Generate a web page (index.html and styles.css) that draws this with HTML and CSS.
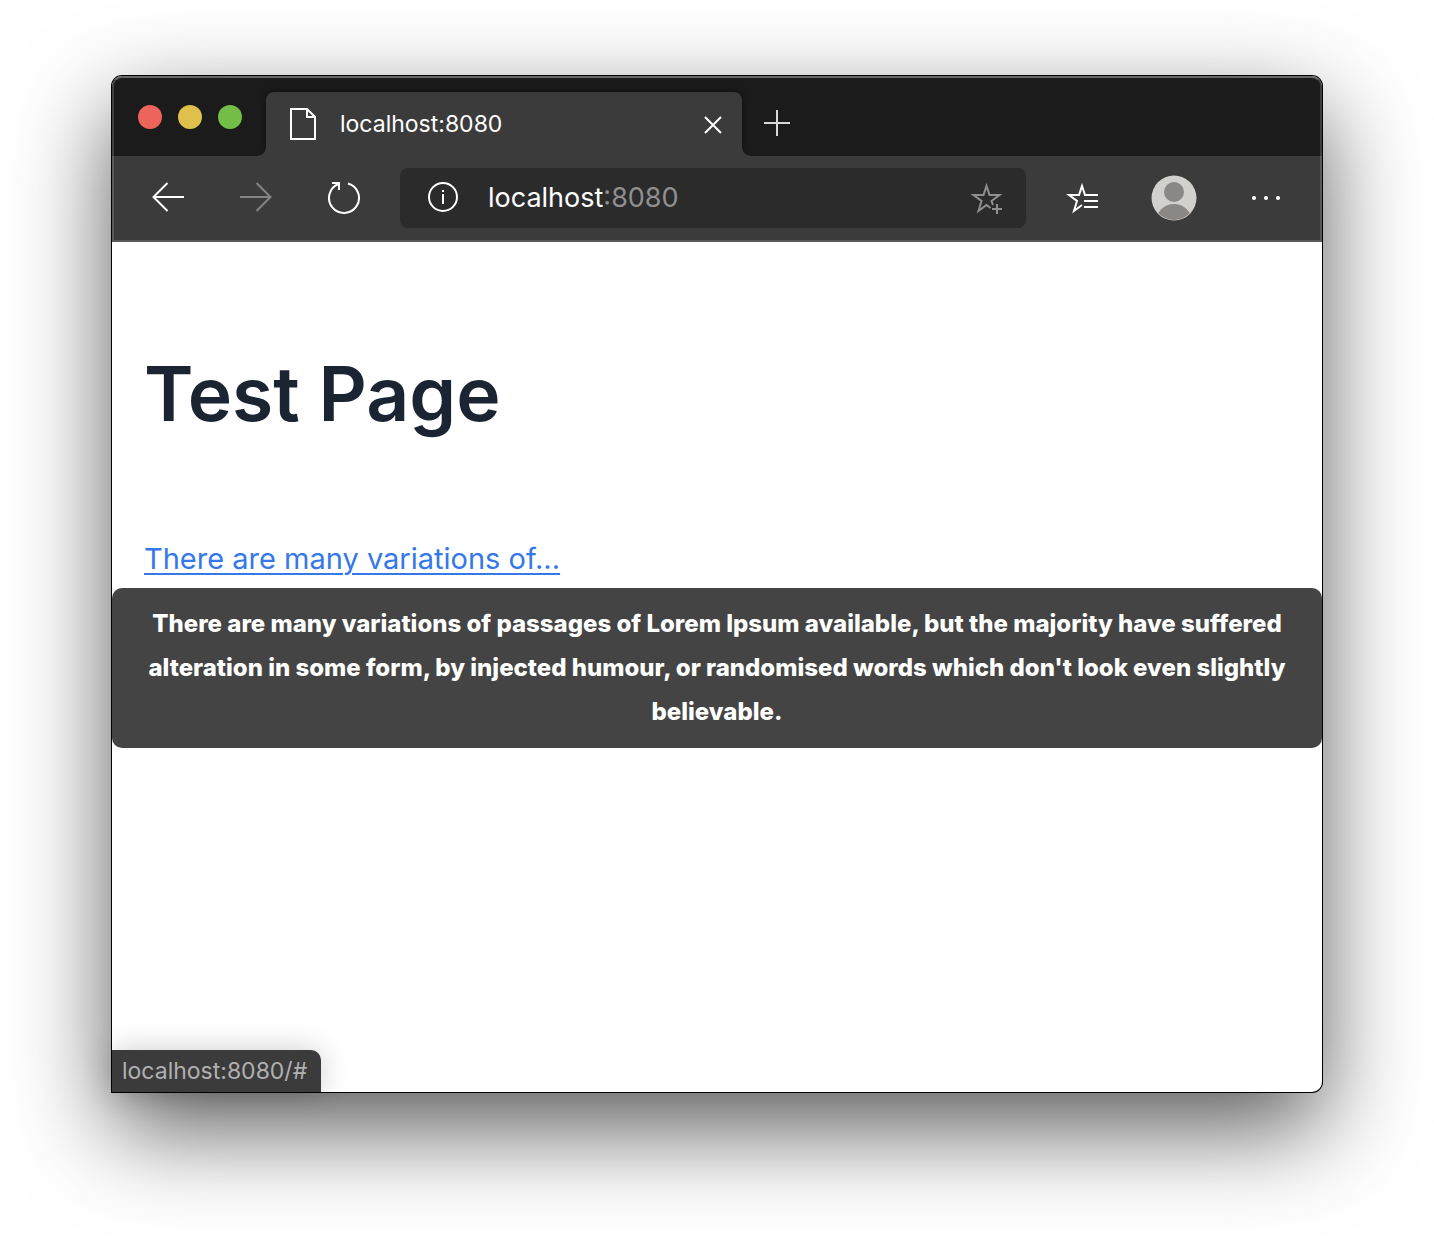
FILE: index.html
```
<!DOCTYPE html>
<html lang="en">
<head>
<meta charset="utf-8">
<title>Test Page</title>
<link rel="stylesheet" href="styles.css">
</head>
<body>
<div class="window">
  <header class="chrome">
    <div class="tabstrip">
      <div class="lights">
        <button class="light light-close" aria-label="Close window"></button>
        <button class="light light-min" aria-label="Minimize window"></button>
        <button class="light light-max" aria-label="Zoom window"></button>
      </div>
      <div class="tab">
        <svg class="tab-icon" width="28" height="34" viewBox="0 0 28 34" fill="none" stroke="#fff" stroke-width="2" aria-hidden="true"><path d="M2 2H18L26 10V32H2Z"/><path d="M18 2V10H26"/></svg>
        <span class="tab-title">localhost:8080</span>
        <button class="icon-button tab-close" aria-label="Close tab">
          <svg width="18" height="20" viewBox="0 0 18 20" fill="none" stroke="#fff" stroke-width="2"><path d="M1 3L17 19M17 3L1 19"/></svg>
        </button>
      </div>
      <button class="icon-button new-tab" aria-label="New tab">
        <svg width="26" height="26" viewBox="0 0 26 26" fill="none" stroke="#d9d7d9" stroke-width="2"><path d="M13 0V26M0 13H26"/></svg>
      </button>
    </div>
    <nav class="toolbar" aria-label="Browser toolbar">
      <div class="group">
        <button class="icon-button nav-button" aria-label="Back">
          <svg width="32" height="32" viewBox="0 0 32 32" fill="none" stroke="#fff" stroke-width="2"><path d="M32 15H2M15.500 1L1.500 15L15.500 29"/></svg>
        </button>
        <button class="icon-button nav-button" aria-label="Forward">
          <svg width="32" height="32" viewBox="0 0 32 32" fill="none" stroke="#858585" stroke-width="2"><path d="M0 15H30M16.500 1L30.500 15L16.500 29"/></svg>
        </button>
        <button class="icon-button nav-button" aria-label="Reload">
          <svg width="34" height="36" viewBox="0 0 34 36" fill="none" stroke="#fff" stroke-width="2"><path d="M21 3.500A15 15 0 1 1 11.500 4"/><path d="M5 3H12V10"/></svg>
        </button>
      </div>
      <div class="address">
        <svg width="30" height="32" viewBox="0 0 30 32" fill="none" stroke="#fff" stroke-width="2" aria-hidden="true"><circle cx="15" cy="15" r="14"/><path d="M15 12V22M15 8V10"/></svg>
        <label class="url">
          <input class="url-host" type="text" value="localhost" size="9" aria-label="Address">
          <span class="url-port">:8080</span>
        </label>
        <button class="icon-button add-favorite" aria-label="Add to favorites">
          <svg width="34" height="34" viewBox="0 0 34 34" fill="none" stroke="#8f8f8f" stroke-width="2"><path d="M20.500 27L16.500 24L8.500 30L11.500 20L3.500 14H13.500L16.500 5L19.500 14H29.500L21.500 20L23 24"/><path d="M27 23V33M22 28H32"/></svg>
        </button>
      </div>
      <div class="group">
        <button class="icon-button tool-button" aria-label="Favorites">
          <svg width="34" height="34" viewBox="0 0 34 34" fill="none" stroke="#fff" stroke-width="2"><path d="M33 14H20L17 5L14 14H4L12 20L9 30L17 24"/><path d="M19 20H33M19 26H33"/></svg>
        </button>
        <button class="icon-button tool-button" aria-label="Profile">
          <svg width="46" height="46" viewBox="0 0 46 46"><defs><clipPath id="disc"><circle cx="23" cy="23" r="22"/></clipPath></defs><circle cx="23" cy="23" r="22.500" fill="#d1d0cc"/><circle cx="23" cy="17" r="10" fill="#8b8785"/><circle cx="23" cy="47" r="18" fill="#8b8785" clip-path="url(#disc)"/></svg>
        </button>
        <button class="icon-button tool-button" aria-label="Settings and more">
          <svg width="30" height="6" viewBox="0 0 30 6" fill="#fff"><circle cx="3" cy="3" r="2"/><circle cx="15" cy="3" r="2"/><circle cx="27" cy="3" r="2"/></svg>
        </button>
      </div>
    </nav>
  </header>
  <main class="page">
    <h1 class="title">Test Page</h1>
    <div class="teaser">
      <a class="teaser-link" href="#" aria-describedby="full-text">There are many variations of...</a>
      <div class="tooltip" id="full-text" role="tooltip">There are many variations of passages of Lorem Ipsum available, but the majority have suffered alteration in some form, by injected humour, or randomised words which don't look even slightly believable.</div>
    </div>
    <div class="status">localhost:8080/#</div>
  </main>
</div>
</body>
</html>
```
FILE: styles.css
```
* {
  box-sizing: border-box;
}

body {
  display: flex;
  min-height: 100vh;
  margin: 0;
  padding: 76px 112px 148px;
  background: #fff;
  font-family: Inter, "Liberation Sans", sans-serif;
  overflow: hidden;
}

button {
  padding: 0;
  border: 0;
  background: none;
}

.window {
  display: flex;
  flex: 1;
  flex-direction: column;
  min-width: 0;
  border-radius: 10px 10px 10px 0;
  background: #fff;
  box-shadow: 0 0 0 1px #000, 0 36px 96px rgba(0, 0, 0, 0.65);
}

.chrome {
  position: relative;
  border-radius: 10px 10px 0 0;
  background: #1b1b1b;
}

/* light rim on the inside edge of the title area */
.chrome::after {
  position: absolute;
  inset: 0;
  border: 2px solid rgba(255, 255, 255, 0.16);
  border-top-color: rgba(255, 255, 255, 0.34);
  border-radius: 10px 10px 0 0;
  content: "";
  pointer-events: none;
}

.tabstrip {
  display: flex;
  height: 80px;
  padding-left: 26px;
}

.lights {
  display: flex;
  gap: 16px;
  padding: 29px 24px 0 0;
}

.light {
  width: 24px;
  height: 24px;
  border-radius: 50%;
}

.light-close {
  background: #ed655a;
}

.light-min {
  background: #e0c04c;
}

.light-max {
  background: #72be47;
}

.tab {
  position: relative;
  display: flex;
  align-items: center;
  width: 476px;
  margin-top: 16px;
  padding: 0 20px 0 23px;
  border-radius: 8px 8px 0 0;
  background: #3b3b3b;
  color: #fff;
  font-size: 23px;
  box-shadow: 0 0 6px rgba(0, 0, 0, 0.5);
}

.tab::before,
.tab::after {
  position: absolute;
  bottom: 0;
  width: 8px;
  height: 8px;
  content: "";
}

.tab::before {
  right: 100%;
  background: radial-gradient(circle at 0 0, transparent 7px, #3b3b3b 8px);
}

.tab::after {
  left: 100%;
  background: radial-gradient(circle at 100% 0, transparent 7px, #3b3b3b 8px);
}

.tab-title {
  flex: 1;
  padding-left: 23px;
}

.icon-button {
  display: flex;
  align-items: center;
  justify-content: center;
}

.new-tab {
  width: 70px;
  margin-top: 14px;
}

.toolbar {
  position: relative;
  display: flex;
  align-items: center;
  padding: 12px 10px 14px 12px;
  background: #3b3b3b;
}

.group {
  display: flex;
}

.nav-button {
  width: 88px;
  height: 60px;
}

.tool-button {
  width: 92px;
  height: 60px;
}

.address {
  display: flex;
  flex: 1;
  align-items: center;
  height: 60px;
  margin: 0 10px 0 12px;
  padding: 0 22px 0 28px;
  border-radius: 8px;
  background: #2b2b2b;
}

.url {
  display: flex;
  flex: 1;
  padding-left: 30px;
  font-size: 27px;
  line-height: 32px;
}

.url-host {
  field-sizing: content;
  padding: 0;
  border: 0;
  outline: 0;
  background: none;
  color: #fff;
  font: inherit;
}

.url-port {
  color: #8f8f8f;
}

.page {
  position: relative;
  flex: 1;
  padding-top: 92px;
}

.title {
  margin: 0;
  padding: 0 32px;
  color: #1a2433;
  font-size: 75px;
  font-weight: 600;
  line-height: 120px;
}

.teaser {
  position: relative;
  margin-top: 80px;
  padding: 0 32px 4px;
  font-size: 29px;
  line-height: 50px;
}

.teaser-link {
  color: #3478ea;
  text-decoration-thickness: 2px;
  text-underline-offset: 4px;
}

.tooltip {
  position: absolute;
  top: 100%;
  right: 0;
  left: 0;
  padding: 14px 32px;
  border-radius: 10px;
  background: #444;
  color: #fff;
  font-size: 24px;
  font-weight: 800;
  line-height: 44px;
  text-align: center;
}

.status {
  position: absolute;
  bottom: 0;
  left: 0;
  padding: 0 14px 0 10px;
  border-radius: 0 10px 0 0;
  background: #3b3b3b;
  color: #b0b0b0;
  font-size: 23px;
  line-height: 42px;
  box-shadow: 0 0 30px rgba(0, 0, 0, 0.2);
}
```
